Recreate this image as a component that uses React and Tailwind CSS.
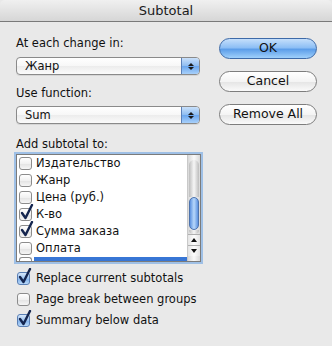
import React from "react";

const F = { fontFamily: '"DejaVu Sans", "Noto Sans", sans-serif' };

function Check({ checked, blue }) {
  return (
    <div className="relative w-[13px] h-[13px] shrink-0">
      <div
        className={
          "absolute inset-0 rounded-[3px] border " +
          (blue
            ? "border-[#5a7fb5] bg-[linear-gradient(#d6e7fb,#9cc3f0_50%,#7fb1ec_51%,#b9d8f8)]"
            : "border-[#8c8c8c] bg-[linear-gradient(#ffffff,#f1f1f1_50%,#e2e2e2_51%,#f6f6f6)]")
        }
      />
      {checked && (
        <svg className="absolute left-[1px] top-[-4px]" width="14" height="16" viewBox="0 0 14 16">
          <path d="M2 9 L5.5 14 L12 1" fill="none" stroke="#14254f" strokeWidth="2.4" strokeLinecap="round" strokeLinejoin="round" />
        </svg>
      )}
    </div>
  );
}

function Popup({ value }) {
  return (
    <div className="flex h-[18px] w-[184px] rounded-[4px] border border-[#8a8a8a] overflow-hidden bg-[linear-gradient(#ffffff,#f7f7f7_50%,#ececec_51%,#fbfbfb)] shadow-[0_1px_0_rgba(0,0,0,0.08)]">
      <div className="flex-1 pl-[8px] text-[11.5px] leading-[16px] text-[#111]">{value}</div>
      <div className="w-[18px] border-l border-[#5b80b8] bg-[linear-gradient(#c9e0fa,#8dbcf1_50%,#6aa6ee_51%,#a8d0fa)] flex flex-col items-center justify-center gap-[1px]">
        <svg width="6" height="3" viewBox="0 0 6 3"><path d="M0 3 L3 0 L6 3Z" fill="#1a1a1a" /></svg>
        <svg width="6" height="3" viewBox="0 0 6 3"><path d="M0 0 L3 3 L6 0Z" fill="#1a1a1a" /></svg>
      </div>
    </div>
  );
}

function Btn({ children, primary }) {
  return (
    <div
      className={
        "h-[21px] w-[98px] rounded-full border flex items-center justify-center text-[12.5px] text-[#111] " +
        (primary
          ? "border-[#3d6aa8] bg-[linear-gradient(#c5dffb,#8ebff5_45%,#5d9ee9_55%,#9fd0fb)]"
          : "border-[#7d7d7d] bg-[linear-gradient(#ffffff,#f4f4f4_50%,#e6e6e6_55%,#fafafa)]")
      }
    >
      {children}
    </div>
  );
}

const items = [
  ["Издательство", false],
  ["Жанр", false],
  ["Цена (руб.)", false],
  ["К-во", true],
  ["Сумма заказа", true],
  ["Оплата", false],
];

function ArrowBtn({ up }) {
  return (
    <div className="h-[11px] border-t border-[#b0b0b0] flex items-center justify-center bg-[linear-gradient(90deg,#e4e4e4,#fdfdfd_50%,#e4e4e4)]">
      <svg width="6" height="4" viewBox="0 0 6 4">
        <path d={up ? "M0 4 L3 0 L6 4Z" : "M0 0 L3 4 L6 0Z"} fill="#111" />
      </svg>
    </div>
  );
}

export default function App() {
  return (
    <div style={F} className="w-[332px] h-[346px] bg-[#e9e9e9] flex flex-col overflow-hidden text-[#111]">
      <div className="h-[22px] shrink-0 rounded-t-[5px] border-b border-[#7a7a7a] bg-[linear-gradient(#f0f0f0,#d6d6d6)] flex items-center justify-center text-[13px] text-[#1a1a1a]">
        Subtotal
      </div>
      <div className="flex flex-1">
        <div className="pl-[16px] flex flex-col">
          <div className="mt-[14px] h-[14px] text-[11.5px] leading-[14px]">At each change in:</div>
          <div className="mt-[7px]"><Popup value="Жанр" /></div>
          <div className="mt-[11px] h-[14px] text-[11.5px] leading-[14px]">Use function:</div>
          <div className="mt-[6px]"><Popup value="Sum" /></div>
          <div className="mt-[13px] h-[14px] text-[11.5px] leading-[14px]">Add subtotal to:</div>
          <div className="mt-[3px] h-[108px] w-[185px] border border-[#7b7b7b] shadow-[0_0_0_2px_#9fc0e6] bg-white flex overflow-hidden">
            <div className="flex-1 flex flex-col overflow-hidden">
              {items.map(([t, c]) => (
                <div key={t} className="h-[17px] shrink-0 flex items-center gap-[4px] pl-[2px] text-[11.5px]">
                  <Check checked={c} />
                  <span>{t}</span>
                </div>
              ))}
              <div className="h-[17px] shrink-0 flex items-start pl-[2px]">
                <div className="w-[13px] h-[4px] border border-[#8c8c8c] border-b-0 rounded-t-[3px]" />
                <div className="ml-[2px] mt-[0px] flex-1 h-[8px] bg-[#3876d5]" />
              </div>
            </div>
            <div className="w-[13px] shrink-0 border-l border-[#c9c9c9] flex flex-col bg-[linear-gradient(90deg,#d9d9d9,#fafafa_50%,#d9d9d9)]">
              <div className="h-[5px]" />
              <div className="mx-[1px] h-[37px] rounded-t-full bg-[linear-gradient(90deg,#bdbdbd,#f6f6f6_50%,#bdbdbd)]" />
              <div className="mx-[1px] h-[33px] rounded-full border border-[#4d73ad] bg-[linear-gradient(90deg,#5d92e0,#b8d8fb_50%,#5d92e0)]" />
              <div className="mx-[1px] h-[4px] rounded-b-full bg-[linear-gradient(90deg,#bdbdbd,#f6f6f6_50%,#bdbdbd)]" />
              <ArrowBtn up />
              <ArrowBtn />
              <div className="flex-1" />
            </div>
          </div>
          <div className="mt-[10px] flex flex-col gap-[8px] pl-[1px]">
            <div className="h-[13px] flex items-center gap-[6px] text-[11.5px]"><Check checked blue /><span>Replace current subtotals</span></div>
            <div className="h-[13px] flex items-center gap-[6px] text-[11.5px]"><Check /><span>Page break between groups</span></div>
            <div className="h-[13px] flex items-center gap-[6px] text-[11.5px]"><Check checked blue /><span>Summary below data</span></div>
          </div>
        </div>
        <div className="ml-[18px] mt-[16px] flex flex-col gap-[12px]">
          <Btn primary>OK</Btn>
          <Btn>Cancel</Btn>
          <Btn>Remove All</Btn>
        </div>
      </div>
    </div>
  );
}
